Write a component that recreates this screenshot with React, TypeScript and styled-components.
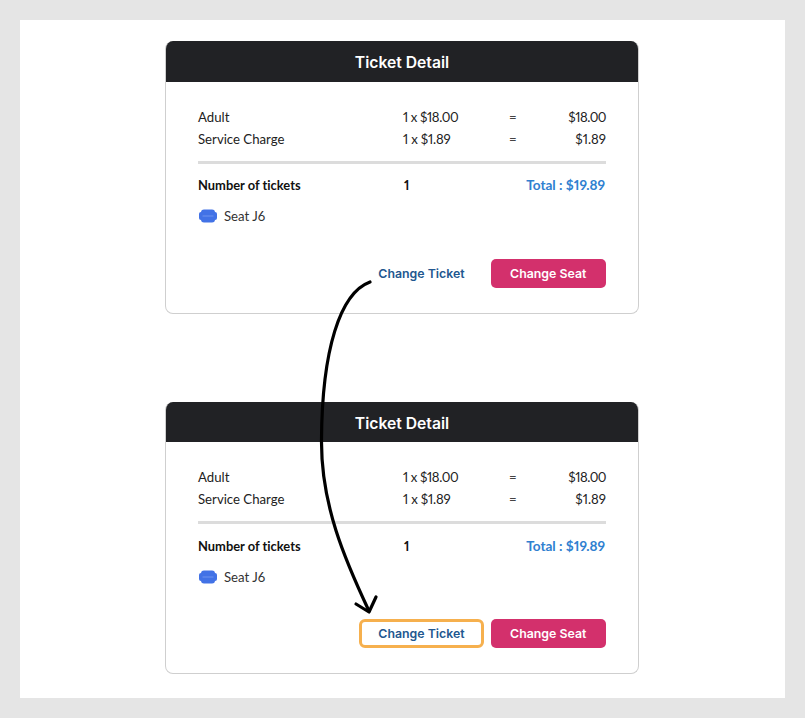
import React from "react";
import styled, { createGlobalStyle } from "styled-components";

const Global = createGlobalStyle`
  html, body { margin: 0; padding: 0; background: #e5e5e5; }
  body { font-family: "Lato", "Liberation Sans", sans-serif; font-variant-ligatures: none; font-variant-numeric: proportional-nums; }
`;

const Page = styled.div`
  width: 805px;
  height: 718px;
  box-sizing: border-box;
  padding: 20px;
  background: #e5e5e5;
`;

const Panel = styled.main`
  position: relative;
  height: 678px;
  box-sizing: border-box;
  padding: 21px 0 0 145px;
  background: #fff;
  display: flex;
  flex-direction: column;
  align-items: flex-start;
  gap: 88px;
`;

const Card = styled.section<{ $lower?: boolean }>`
  width: 474px;
  height: ${(p) => (p.$lower ? 272 : 273)}px;
  box-sizing: border-box;
  border: 1px solid #cfcfcf;
  border-top: 0;
  border-radius: 8px;
  overflow: hidden;
  background: #fff;
  display: flex;
  flex-direction: column;
`;

const Header = styled.h2<{ $lower?: boolean }>`
  margin: 0 -1px;
  height: ${(p) => (p.$lower ? 40 : 41)}px;
  flex: none;
  background: #212225;
  color: #fff;
  font: 600 15.7px/43px "Inter", sans-serif;
  text-align: center;
`;

const Body = styled.div`
  flex: 1;
  padding: 24px 32px 0;
  display: flex;
  flex-direction: column;
`;

const Row = styled.div`
  display: grid;
  grid-template-columns: 205px 106px 1fr auto;
  height: 22px;
  align-items: center;
  font-size: 13.2px;
  color: #222;
`;

const Figure = styled.span<{ $spacing: number }>`
  letter-spacing: ${(p) => p.$spacing}px;
`;

const Equal = styled.span`
  color: #444;
`;

const Divider = styled.hr`
  margin: 11px 0 0;
  border: 0;
  height: 3px;
  background: #dcdcdc;
`;

const SummaryRow = styled.div<{ $lower?: boolean }>`
  display: grid;
  grid-template-columns: 205px 1fr auto;
  margin-top: ${(p) => (p.$lower ? 12 : 11)}px;
  height: 20px;
  align-items: center;
  font-size: 12.9px;
  font-weight: 700;
  color: #111;
`;

const Count = styled.span`
  padding-left: 1px;
`;

const Total = styled.span`
  color: #2f80d0;
  font-size: 13.6px;
  padding-right: 1px;
`;

const SeatRow = styled.div`
  display: flex;
  align-items: center;
  gap: 7px;
  margin-top: 11px;
  height: 20px;
  padding-left: 1px;
  font-size: 13.2px;
  color: #333;
`;

const Actions = styled.div<{ $lower?: boolean }>`
  display: flex;
  justify-content: flex-end;
  align-items: center;
  gap: 6.5px;
  margin-top: ${(p) => (p.$lower ? 32 : 33)}px;
`;

const TicketButton = styled.button<{ $focused?: boolean }>`
  width: 125px;
  height: 29px;
  box-sizing: border-box;
  padding: 0;
  border: 3px solid ${(p) => (p.$focused ? "#f6b04e" : "transparent")};
  border-radius: 6px;
  background: #fff;
  color: #22578f;
  font: 600 12.35px "Inter", sans-serif;
`;

const SeatButton = styled.button`
  width: 115.5px;
  height: 29px;
  padding: 0;
  border: 0;
  border-radius: 5px;
  background: #d3306c;
  color: #fff;
  font: 600 12.35px "Inter", sans-serif;
`;

const Overlay = styled.svg`
  position: absolute;
  left: -20px;
  top: -20px;
  width: 805px;
  height: 718px;
  pointer-events: none;
`;

const SeatIcon = () => (
  <svg width="18" height="14" viewBox="0 0 18 14">
    <rect x="2" y="0.5" width="14" height="13" rx="3" fill="#4272e6" />
    <rect x="0" y="3" width="18" height="8" rx="2" fill="#4272e6" />
    <path d="M3.5 7h11" stroke="#6f93ee" strokeWidth="1" />
  </svg>
);

const TicketCard = ({ lower }: { lower?: boolean }) => (
  <Card $lower={lower}>
    <Header $lower={lower}>Ticket Detail</Header>
    <Body>
      <Row>
        <span>Adult</span>
        <Figure $spacing={-0.4}>1 x $18.00</Figure>
        <Equal>=</Equal>
        <Figure $spacing={-0.5}>$18.00</Figure>
      </Row>
      <Row>
        <span>Service Charge</span>
        <Figure $spacing={-0.2}>1 x $1.89</Figure>
        <Equal>=</Equal>
        <Figure $spacing={0}>$1.89</Figure>
      </Row>
      <Divider />
      <SummaryRow $lower={lower}>
        <span>Number of tickets</span>
        <Count>1</Count>
        <Total>Total : $19.89</Total>
      </SummaryRow>
      <SeatRow>
        <SeatIcon />
        <span>Seat J6</span>
      </SeatRow>
      <Actions $lower={lower}>
        <TicketButton $focused={lower}>Change Ticket</TicketButton>
        <SeatButton>Change Seat</SeatButton>
      </Actions>
    </Body>
  </Card>
);

export default function App() {
  return (
    <Page>
      <Global />
      <Panel>
        <TicketCard />
        <TicketCard lower />
        <Overlay viewBox="0 0 805 718" fill="none" stroke="#000" strokeWidth="3.2" strokeLinecap="round" strokeLinejoin="round">
          <path d="M370 282C340 293 322 350 321.5 440C321 505 345 560 369 611" />
          <path d="M356 604L369 612L376 597" />
        </Overlay>
      </Panel>
    </Page>
  );
}
